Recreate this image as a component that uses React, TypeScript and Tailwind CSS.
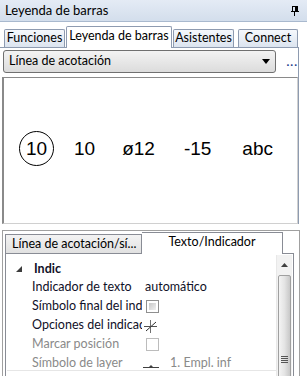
import React from "react";

const ui = { fontFamily: 'Lato, "Noto Sans", sans-serif' };
const arial = { fontFamily: '"Liberation Sans", Arial, sans-serif' };

function Checkbox({ disabled }: { disabled?: boolean }) {
  return (
    <div
      className={
        "w-[13px] h-[13px] border " +
        (disabled ? "border-[#bcbcbc] bg-white" : "border-[#8f8f8f] p-[2px] bg-white")
      }
    >
      {!disabled && <div className="w-full h-full bg-gradient-to-br from-[#c8c8c8] to-[#f0f0f0]" />}
    </div>
  );
}

function Row({ label, children, disabled }: { label: string; children?: React.ReactNode; disabled?: boolean }) {
  return (
    <div className="flex items-center h-[19px]">
      <div
        className={"w-[135px] pl-[25px] shrink-0 overflow-hidden whitespace-nowrap " + (disabled ? "text-[#8a8a8a]" : "text-[#101028]")}
      >
        {label}
      </div>
      <div className="flex items-center pl-[4px]">{children}</div>
    </div>
  );
}

export default function App() {
  return (
    <div className="w-[307px] h-[376px] bg-white overflow-hidden text-[12.5px] leading-none" style={ui}>
      {/* Title bar */}
      <div className="h-[22px] flex items-center justify-between pl-[5px] pr-[8px] bg-gradient-to-b from-[#e4ebf5] to-[#d3deec] border-b border-[#a9b9ce] text-[#000]">
        <span className="text-[13px]">Leyenda de barras</span>
        <svg width="8" height="10" viewBox="0 0 8 10">
          <rect x="1.5" y="0.5" width="5" height="5" fill="none" stroke="#000" />
          <rect x="4" y="1" width="2" height="4" fill="#000" />
          <rect x="0" y="5" width="8" height="1" fill="#000" />
          <rect x="3" y="6" width="1" height="4" fill="#000" />
        </svg>
      </div>

      {/* Tabs */}
      <div className="flex items-end h-[25px] pl-[4px]">
        <div className="w-[61px] h-[18px] flex items-center justify-center border border-b-0 border-[#8e9bb0] rounded-t-[2px] bg-gradient-to-b from-[#f5f8fc] to-[#dce4ef]">
          Funciones
        </div>
        <div className="w-[106px] h-[22px] ml-[1px] flex items-center justify-center border border-b-0 border-[#8e9bb0] rounded-t-[2px] bg-white relative top-[1px] pb-[3px]">
          Leyenda de barras
        </div>
        <div className="w-[61px] h-[18px] ml-[1px] flex items-center justify-center border border-b-0 border-[#8e9bb0] rounded-t-[2px] bg-gradient-to-b from-[#f5f8fc] to-[#dce4ef]">
          Asistentes
        </div>
        <div className="w-[60px] h-[18px] ml-[4px] flex items-center justify-center border border-b-0 border-[#8e9bb0] rounded-t-[2px] bg-gradient-to-b from-[#f5f8fc] to-[#dce4ef]">
          Connect
        </div>
      </div>

      {/* Tab panel */}
      <div className="w-[299px] border-t border-r border-[#8e9bb0] h-[177px]">
        <div className="flex items-center pl-[3px] pt-[2px]">
          <div className="w-[275px] h-[23px] flex items-center justify-between pl-[5px] pr-[5px] border border-[#707070] rounded-[3px] bg-gradient-to-b from-[#f3f3f3] to-[#dcdcdc]">
            <span>Línea de acotación</span>
            <svg width="8" height="5" viewBox="0 0 8 5">
              <path d="M0 0 H8 L4 5 Z" fill="#000" />
            </svg>
          </div>
          <span className="ml-[10px] text-[#1c3c8c] font-bold tracking-[1px] text-[12px] mt-[1px]">...</span>
        </div>
        <div className="mt-[4px] ml-[2px] w-[296px] h-[147px] border-l-2 border-b border-r border-t border-l-[#8a8a8a] border-t-[#8a8a8a] border-b-[#d0d0d0] border-r-[#d0d0d0] bg-white flex items-center">
          <div className="flex items-center pl-[15px] pb-[5px] text-[19px] text-black" style={arial}>
            <div className="w-[35px] h-[35px] rounded-full border border-black flex items-center justify-center">10</div>
            <span className="ml-[20px]">10</span>
            <span className="ml-[27px]">ø12</span>
            <span className="ml-[29px]">-15</span>
            <span className="ml-[31px]">abc</span>
          </div>
        </div>
      </div>

      {/* Lower section */}
      <div className="mt-[6px] ml-[2px] w-[298px] h-[150px] border-t border-l border-r border-[#a0a0a0] pl-[2px]">
        <div className="flex items-end h-[22px]">
          <div className="w-[137px] h-[19px] flex items-center pl-[6px] border border-b-0 border-[#898c95] bg-gradient-to-b from-[#f3f3f3] to-[#e1e1e1] whitespace-nowrap overflow-hidden">
            Línea de acotación/sí...
          </div>
          <div className="w-[141px] h-[22px] flex items-center justify-center border border-b-0 border-l-0 border-[#898c95] bg-white relative top-[1px] pb-[3px]">
            Texto/Indicador
          </div>
        </div>
        <div className="w-[289px] h-[130px] border border-[#898c95] p-[1px] bg-white">
          <div className="flex h-full">
            <div className="flex-1 relative">
              <div className="flex items-center h-[23px] pt-[5px]">
                <svg width="6" height="6" viewBox="0 0 6 6" className="ml-[9px]">
                  <path d="M6 0 V6 H0 Z" fill="#3c3c3c" />
                </svg>
                <span className="ml-[12px] font-bold text-[#101028]">Indic</span>
              </div>
              <Row label="Indicador de texto">
                <span className="text-[#101028] -ml-[1px]">automático</span>
              </Row>
              <Row label="Símbolo final del indicador">
                <Checkbox />
              </Row>
              <Row label="Opciones del indicador">
                <svg width="16" height="14" viewBox="0 0 16 14" className="-ml-[2px]">
                  <path d="M0 7.5 H13" stroke="#505050" strokeWidth="1" />
                  <path d="M6.5 1 V14" stroke="#707070" strokeWidth="1" />
                  <path d="M2 12 L12 3" stroke="#303030" strokeWidth="1" />
                </svg>
              </Row>
              <Row label="Marcar posición" disabled>
                <Checkbox disabled />
              </Row>
              <Row label="Símbolo de layer" disabled>
                <svg width="16" height="10" viewBox="0 0 16 10" className="-ml-[3px]">
                  <path d="M0 8.5 H16" stroke="#404040" strokeWidth="1" />
                  <path d="M6 8 L8 6 L10 8 Z" fill="#404040" />
                </svg>
                <span className="ml-[11px] text-[#8a8a8a]">1. Empl. inf</span>
              </Row>
              <div className="absolute left-0 right-0 top-[115px] h-px bg-[#e6e6e6]" />
            </div>
            <div className="w-[16px] h-full flex flex-col border-l border-[#e8e8e8] bg-[#f2f2f2]">
              <div className="h-[20px] flex items-center justify-center">
                <svg width="7" height="4" viewBox="0 0 7 4">
                  <path d="M0 4 L3.5 0 L7 4 Z" fill="#404040" />
                </svg>
              </div>
              <div className="flex-1 mx-[1px] border border-[#a0a0a0] rounded-[2px] bg-gradient-to-r from-[#f4f4f4] via-[#e4e4e4] to-[#c8c8c8] flex items-end justify-center pb-[16px]">
                <svg width="7" height="8" viewBox="0 0 7 8">
                  <path d="M0 0.5 H7 M0 2.5 H7 M0 4.5 H7 M0 6.5 H7" stroke="#555" strokeWidth="1" />
                </svg>
              </div>
            </div>
          </div>
        </div>
      </div>
    </div>
  );
}
